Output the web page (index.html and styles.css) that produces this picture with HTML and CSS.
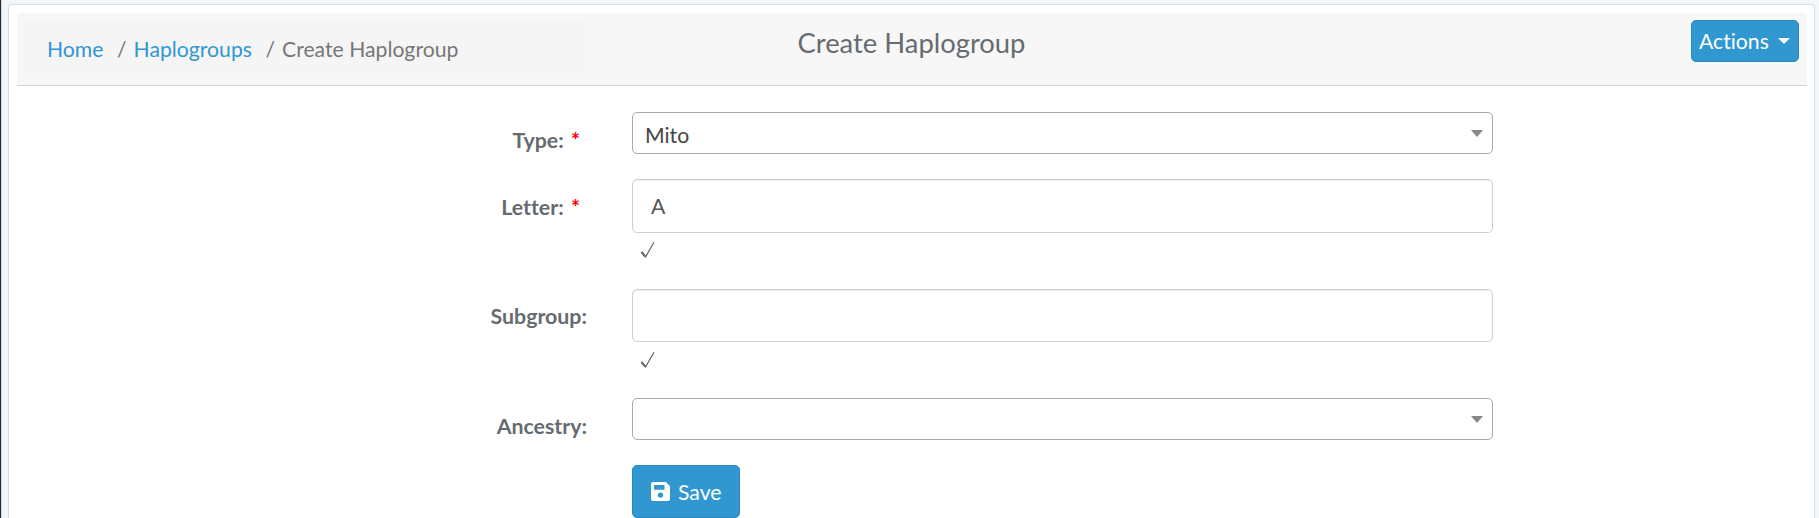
FILE: index.html
```html
<!DOCTYPE html>
<html lang="en">
<head>
<meta charset="utf-8">
<title>Create Haplogroup</title>
<link rel="stylesheet" href="styles.css">
</head>
<body>
<main class="panel">
  <header class="panel-header">
    <nav class="breadcrumb"><a href="#">Home</a><span class="sep">/</span><a href="#">Haplogroups</a><span class="sep">/</span><span>Create Haplogroup</span></nav>
    <h1 class="title">Create Haplogroup</h1>
    <button class="btn actions" type="button">Actions<svg class="caret" width="12" height="6" viewBox="0 0 12 6"><path d="M0 0h12L6 6z"/></svg></button>
  </header>
  <form class="form">
    <div class="row row-type">
      <label class="label">Type: <span class="req">*</span></label>
      <div class="select">Mito<svg class="arrow" width="12" height="7" viewBox="0 0 12 7"><path d="M0 0h12L6 7z"/></svg></div>
    </div>
    <div class="row row-text">
      <label class="label">Letter: <span class="req">*</span></label>
      <div class="field"><input class="input" type="text" value="A"><svg class="check" width="16" height="18" viewBox="0 0 16 18"><path d="M1.2 11.2L5.5 16L14 1.2"/><path class="thick" d="M1.5 11L5.3 15.5"/></svg></div>
    </div>
    <div class="row row-text row-subgroup">
      <label class="label">Subgroup:</label>
      <div class="field"><input class="input" type="text"><svg class="check" width="16" height="18" viewBox="0 0 16 18"><path d="M1.2 11.2L5.5 16L14 1.2"/><path class="thick" d="M1.5 11L5.3 15.5"/></svg></div>
    </div>
    <div class="row row-ancestry">
      <label class="label">Ancestry:</label>
      <div class="select"><svg class="arrow" width="12" height="7" viewBox="0 0 12 7"><path d="M0 0h12L6 7z"/></svg></div>
    </div>
    <button class="btn save" type="button"><svg width="19" height="19" viewBox="0 0 19 19"><path fill-rule="evenodd" d="M2 0h12.8L19 4.2V17a2 2 0 0 1-2 2H2a2 2 0 0 1-2-2V2a2 2 0 0 1 2-2zM3 3v4.8h10.5V3zM9.5 10.4a2.7 2.7 0 1 0 0 5.4a2.7 2.7 0 0 0 0-5.4z"/></svg>Save</button>
  </form>
</main>
</body>
</html>
```
FILE: styles.css
```css
* { box-sizing: border-box; }
html { height: 100%; overflow: hidden; }
body {
  margin: 0;
  height: 518px;
  padding: 4px 4px 0 6px;
  border-left: 1px solid #222d32;
  box-shadow: inset 1px 0 #d5d9dc;
  background: #f3f7fa;
  color: #666b70;
  font: 21.2px/30px Lato, sans-serif;
  font-variant-ligatures: none;
  overflow: hidden;
}
.panel {
  height: 514px;
  margin-left: 1px;
  padding: 8px 7px 0 8px;
  border: 1px solid #dcdcdc;
  border-bottom: 0;
  border-radius: 4px 4px 0 0;
  background: #fff;
  overflow: hidden;
}
.panel-header {
  display: grid;
  grid-template-columns: 1fr auto 1fr;
  align-items: start;
  height: 73px;
  padding: 6px 8px 0 7px;
  border-bottom: 1px solid #d5d5d5;
  border-radius: 3px 3px 0 0;
  background: #f7f7f7;
}
.breadcrumb {
  display: flex;
  height: 59px;
  width: 562px;
  padding: 15px 22px 0 23px;
  border-radius: 5px;
  background: #f5f5f5;
  color: #777;
  white-space: nowrap;
}
.breadcrumb a { color: #3097d1; text-decoration: none; }
.sep { padding: 0 7px 0 13.5px; }
.title {
  margin: 7px 0 0;
  font-size: 27.4px;
  font-weight: 400;
  line-height: 34px;
  color: #666b70;
}
.btn {
  display: flex;
  align-items: center;
  border: 1px solid #2a88bd;
  border-radius: 5px;
  background: #3097d1;
  color: #fff;
  font: 21.2px/30px Lato, sans-serif;
  font-variant-ligatures: none;
}
.btn svg { flex: none; fill: #fff; }
.actions {
  justify-self: end;
  gap: 9px;
  width: 108px;
  height: 42px;
  margin-top: 1px;
  padding: 0 8px 0 7px;
}
.form { padding-top: 26px; }
.row {
  display: grid;
  grid-template-columns: 570px 861px;
  column-gap: 45px;
  align-items: start;
}
.row-type { height: 67px; }
.row-text { height: 110px; }
.row-subgroup { height: 109px; }
.row-ancestry { height: 67px; }
.label {
  margin-top: 13px;
  text-align: right;
  font-size: 21.35px;
  font-weight: 700;
  white-space: nowrap;
}
.row-subgroup .label { margin-top: 12px; }
.req { margin-left: 2px; padding-right: 7px; color: #f00; }
.select {
  display: flex;
  align-items: center;
  justify-content: space-between;
  height: 42px;
  padding: 3px 9px 0 12px;
  border: 1px solid #aaa;
  border-radius: 5px;
  color: #444;
}
.arrow { margin: -2px 0 0 auto; fill: #888; }
.field { display: flex; flex-direction: column; align-items: flex-start; gap: 8px; }
.row-subgroup .field { gap: 9px; }
.input {
  width: 100%;
  height: 54px;
  padding: 0 18px;
  border: 1px solid #ccd0d2;
  border-radius: 5px;
  background: #fff;
  box-shadow: inset 0 1px 1px rgba(0, 0, 0, .075);
  color: #555;
  font: 21.2px/30px Lato, sans-serif;
}
.row-subgroup .input { height: 53px; }
.check { margin-left: 8px; fill: none; stroke: #666b70; stroke-width: 1.3; }
.thick { stroke-width: 2; }
.save {
  gap: 8px;
  width: 108px;
  height: 53px;
  margin-left: 615px;
  padding: 0 18px;
}
```
